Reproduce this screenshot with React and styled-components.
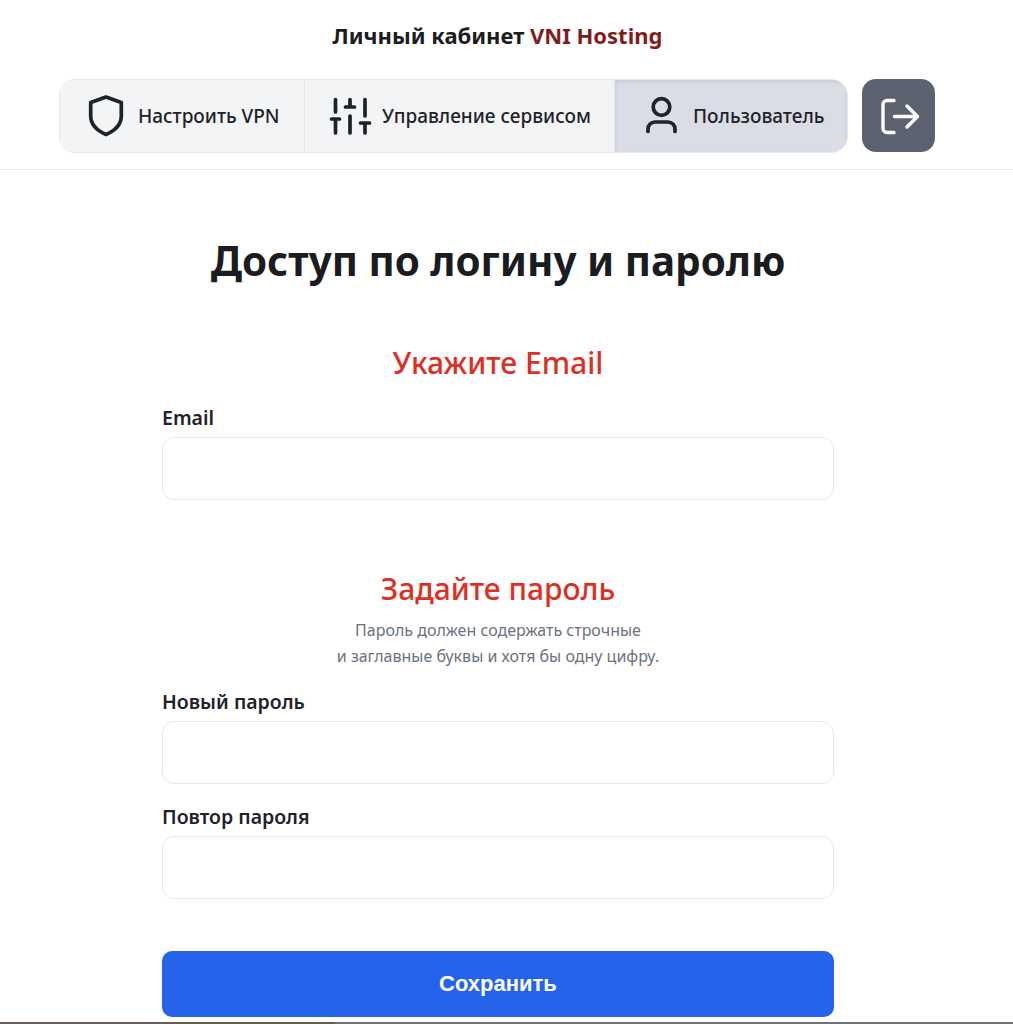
import React from 'react';
import styled, { createGlobalStyle } from 'styled-components';

const GlobalStyle = createGlobalStyle`
  html, body {
    margin: 0;
    padding: 0;
    background: #fff;
    height: 1024px;
    overflow: hidden;
  }
  body {
    font-family: "Noto Sans", "Open Sans", sans-serif;
    color: #1f2229;
  }
  * { box-sizing: border-box; }
`;

const Page = styled.div`
  height: 1024px;
  display: flex;
  flex-direction: column;
`;

const Header = styled.header`
  height: 170px;
  padding-top: 21px;
  border-bottom: 1px solid #e5e7eb;
`;

const Brand = styled.div`
  width: 995px;
  height: 29px;
  line-height: 29px;
  text-align: center;
  font-size: 22px;
  font-weight: 700;
  color: #1b1c20;
  span { color: #7f1d1d; }
`;

const NavRow = styled.nav`
  display: flex;
  align-items: flex-start;
  gap: 14px;
  padding: 29px 0 0 59px;
`;

const Tabs = styled.div`
  display: flex;
  height: 74px;
  border: 1px solid #e5e7eb;
  border-radius: 16px;
  overflow: hidden;
`;

const Tab = styled.button`
  display: flex;
  align-items: center;
  gap: 9px;
  width: ${p => p.$width}px;
  padding: 0 0 0 ${p => p.$pad}px;
  border: 0;
  border-right: 1px solid ${p => (p.$active ? 'transparent' : '#e5e7eb')};
  background: ${p => (p.$active ? '#dadde5' : '#f3f4f6')};
  box-shadow: ${p => (p.$active ? 'inset 0 2px 4px rgba(0,0,0,.09)' : 'none')};
  font: 500 19px "Noto Sans", sans-serif;
  color: #1f2229;
  white-space: nowrap;
  &:last-child { border-right: 0; }
`;

const Logout = styled.button`
  display: flex;
  align-items: center;
  justify-content: center;
  width: 73px;
  height: 73px;
  padding: 0;
  border: 0;
  border-radius: 14px;
  background: #5c6270;
`;

const Main = styled.main`
  width: 672px;
  margin-left: 162px;
  display: flex;
  flex-direction: column;
`;

const Title = styled.h1`
  margin: 63px 0 0;
  height: 55px;
  line-height: 55px;
  text-align: center;
  font-size: 40.4px;
  font-weight: 700;
  color: #1b1c20;
`;

const SectionTitle = styled.h2`
  margin: ${p => p.$top}px 0 0;
  height: 41px;
  line-height: 41px;
  text-align: center;
  font-size: 30px;
  font-weight: 500;
  color: #dc3025;
`;

const Hint = styled.p`
  margin: 8px 0 0;
  text-align: center;
  font-size: 16px;
  line-height: 26px;
  color: #6b7280;
`;

const Label = styled.label`
  display: block;
  margin-top: ${p => p.$top}px;
  height: 25px;
  line-height: 25px;
  font-size: 19.5px;
  font-weight: 600;
  color: #1f2229;
`;

const Input = styled.input`
  display: block;
  width: 100%;
  height: 63px;
  margin-top: 7px;
  border: 1px solid #e5e7eb;
  border-radius: 12px;
  background: #fff;
  outline: none;
`;

const Save = styled.button`
  height: 66px;
  margin-top: 52px;
  border: 0;
  border-radius: 10px;
  background: #2563eb;
  color: #fff;
  font: 700 22px "Liberation Sans", Arial, sans-serif;
`;

const BottomEdge = styled.div`
  position: fixed;
  left: 0;
  right: 0;
  bottom: 0;
  height: 2px;
  background: linear-gradient(to right, #6b5c58 0, #6b5c58 335px, #6f7478 335px);
`;

function Icon({ color = '#1f2229', width = 3.7, children }) {
  return (
    <svg width="46" height="46" viewBox="0 0 46 46" fill="none" stroke={color} strokeWidth={width} strokeLinecap="round" strokeLinejoin="round">
      {children}
    </svg>
  );
}

export default function App() {
  return (
    <Page>
      <GlobalStyle />
      <Header>
        <Brand>Личный кабинет <span>VNI Hosting</span></Brand>
        <NavRow>
          <Tabs>
            <Tab $width={245} $pad={23}>
              <Icon>
                <path d="M23 4 38.3 9.5V23C38.3 32 31 38 23 41.5 15 38 7.7 32 7.7 23V9.5L23 4Z" />
              </Icon>
              Настроить VPN
            </Tab>
            <Tab $width={310} $pad={22}>
              <Icon>
                <path d="M8.5 6.5V19M8.5 26V40M4.5 26h8M23 6.5V14M18.5 14h9M23 23V40M38 6.5V23M38 30V40M33.5 30h9" />
              </Icon>
              Управление сервисом
            </Tab>
            <Tab $active $width={232} $pad={23}>
              <Icon>
                <circle cx="23.5" cy="14" r="8.3" />
                <path d="M10 38.5V36a7 7 0 0 1 7-7h13a7 7 0 0 1 7 7v2.5" />
              </Icon>
              Пользователь
            </Tab>
          </Tabs>
          <Logout aria-label="Выйти">
            <Icon color="#fff" width={3.4}>
              <path d="M18 7.5h-7a4 4 0 0 0-4 4v24a4 4 0 0 0 4 4h7M18.5 23.5H41M31 13 41.5 23.5 31 34" />
            </Icon>
          </Logout>
        </NavRow>
      </Header>
      <Main>
        <Title>Доступ по логину и паролю</Title>
        <SectionTitle $top={54}>Укажите Email</SectionTitle>
        <Label $top={22}>Email</Label>
        <Input type="email" />
        <SectionTitle $top={68}>Задайте пароль</SectionTitle>
        <Hint>Пароль должен содержать строчные<br />и заглавные буквы и хотя бы одну цифру.</Hint>
        <Label $top={20}>Новый пароль</Label>
        <Input type="password" />
        <Label $top={20}>Повтор пароля</Label>
        <Input type="password" />
        <Save>Сохранить</Save>
      </Main>
      <BottomEdge />
    </Page>
  );
}
